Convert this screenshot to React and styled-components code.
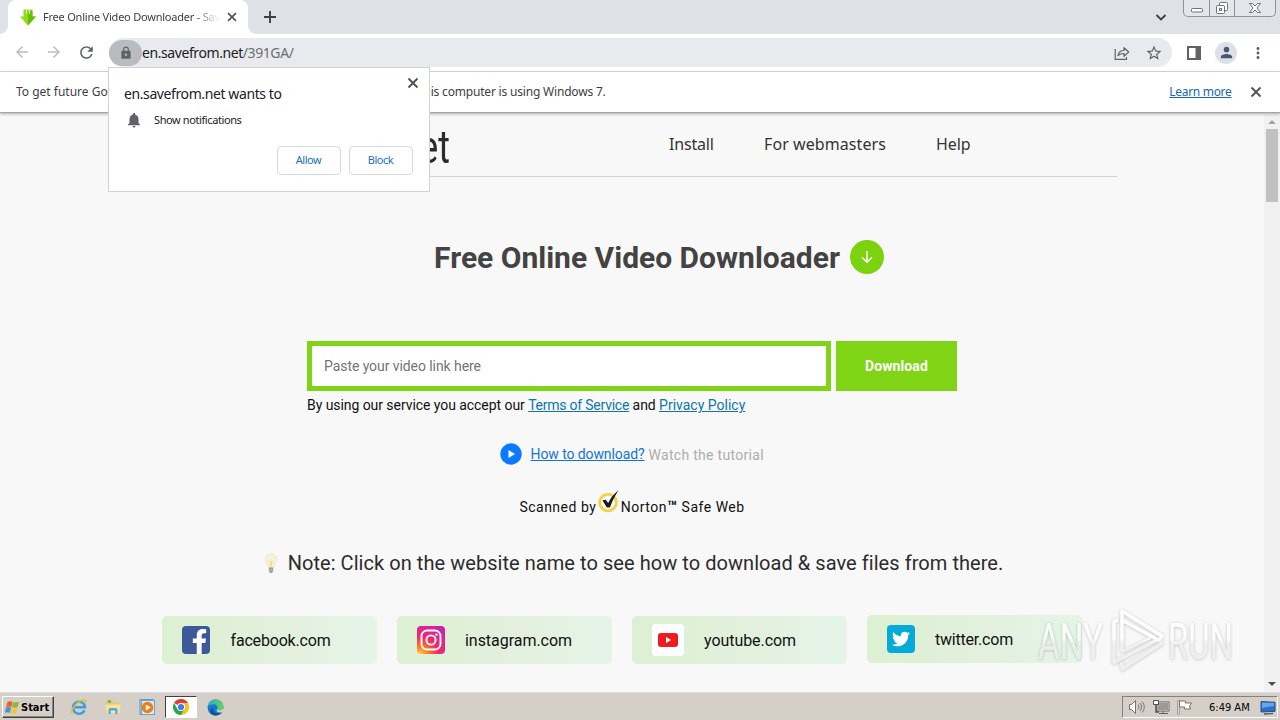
import React from 'react';
import styled, { createGlobalStyle, css } from 'styled-components';
import {
  MdArrowBack,
  MdArrowForward,
  MdRefresh,
  MdLock,
  MdNotifications,
  MdStarBorder,
  MdMoreVert,
  MdPerson,
} from 'react-icons/md';
import { FaTwitter, FaFacebookF } from 'react-icons/fa';

const GlobalStyle = createGlobalStyle`
  * {
    box-sizing: border-box;
  }

  body {
    margin: 0;
    overflow: hidden;
    background: #f8f8f8;
  }
`;

const uiFont = '"Noto Sans", "Open Sans", sans-serif';
const siteFont = 'Roboto, "Liberation Sans", sans-serif';

const Screen = styled.div`
  position: relative;
  display: flex;
  flex-direction: column;
  width: 1280px;
  height: 720px;
  overflow: hidden;
  font-family: ${uiFont};
  color: #202124;
  white-space: nowrap;

  svg {
    display: block;
    flex-shrink: 0;
  }
`;

/* Browser frame */

const TabStrip = styled.div`
  display: flex;
  height: 34px;
  flex-shrink: 0;
  background: #dee1e6;
`;

const Tab = styled.div`
  position: relative;
  display: flex;
  align-items: center;
  width: 240px;
  height: 34px;
  margin-left: 8px;
  padding: 0 9px 0 12px;
  border-radius: 8px 8px 0 0;
  background: #fff;

  &::before,
  &::after {
    content: '';
    position: absolute;
    bottom: 0;
    width: 8px;
    height: 8px;
  }

  &::before {
    left: -8px;
    background: radial-gradient(circle at 0 0, transparent 7.5px, #fff 8px);
  }

  &::after {
    right: -8px;
    background: radial-gradient(circle at 100% 0, transparent 7.5px, #fff 8px);
  }
`;

const TabTitle = styled.div`
  width: 176px;
  margin-left: 7px;
  overflow: hidden;
  font-size: 11px;
  line-height: 16px;
  letter-spacing: -0.22px;
  color: #3c4043;
  mask-image: linear-gradient(to right, black 86%, transparent 100%);
`;

const TabClose = styled.div`
  margin-left: auto;
`;

const NewTab = styled.div`
  display: flex;
  align-items: center;
  margin-left: 13px;
`;

const TabSearch = styled.div`
  display: flex;
  align-items: center;
  margin: 0 14px 0 auto;
`;

const WindowButtons = styled.div`
  display: flex;
  width: 93px;
  height: 17px;
  margin-right: 4px;
  border: 1px solid #8f939b;
  border-top: 0;
  border-radius: 0 0 5px 5px;
  background: #e3e6ea;
`;

const WindowButton = styled.div`
  display: flex;
  justify-content: center;
  width: ${(props) => props.$width}px;

  & + & {
    border-left: 1px solid #8f939b;
  }
`;

const Toolbar = styled.div`
  display: flex;
  align-items: center;
  height: 38px;
  flex-shrink: 0;
  padding: 0 13px 0 13px;
  border-bottom: 1px solid #dadce0;
  background: #fff;
  color: #5f6368;
`;

const NavButtons = styled.div`
  display: flex;
  gap: 14px;
  width: 96px;
`;

const AddressBar = styled.div`
  display: flex;
  align-items: center;
  width: 1063px;
  height: 29px;
  padding-right: 9px;
  border-radius: 15px;
  background: #e8eaed;
`;

const SiteChip = styled.div`
  display: flex;
  align-items: center;
  justify-content: center;
  width: 33px;
  height: 26px;
  border-radius: 13px;
  background: #b9bcbe;
`;

const Url = styled.div`
  flex: 1;
  font-size: 14px;
  line-height: 20px;
  letter-spacing: -0.42px;
  color: #202124;

  span {
    color: #6b6f74;
  }
`;

const AddressIcons = styled.div`
  display: flex;
  align-items: center;
  gap: 15px;
`;

const ToolbarIcons = styled.div`
  display: flex;
  align-items: center;
  margin-left: 15px;
`;

const Avatar = styled.div`
  display: flex;
  align-items: center;
  justify-content: center;
  width: 22px;
  height: 22px;
  margin: 0 12px 0 14px;
  border-radius: 50%;
  background: #dde1e7;
  color: #4a5573;
`;

const InfoBar = styled.div`
  position: relative;
  display: flex;
  align-items: center;
  height: 41px;
  flex-shrink: 0;
  padding: 0 16px;
  border-bottom: 1px solid #a6a6a6;
  background: #fff;
  box-shadow: 0 1px 3px rgba(0, 0, 0, 0.3);
  font-size: 12px;
  line-height: 16px;
  color: #3c4043;
`;

const InfoTail = styled.span`
  letter-spacing: -0.19px;
`;

const LearnMore = styled.a`
  margin: 0 16.5px 0 auto;
  color: #1967b5;
  letter-spacing: -0.3px;
  text-decoration: underline;
`;

/* Permission bubble */

const Bubble = styled.div`
  position: absolute;
  top: 67px;
  left: 108px;
  z-index: 2;
  display: flex;
  flex-direction: column;
  width: 322px;
  height: 125px;
  padding: 16px 16px 16px 15px;
  border: 1px solid #d0d2d5;
  background: #fff;
  color: #202124;
`;

const BubbleClose = styled.div`
  position: absolute;
  top: 7px;
  right: 8px;
`;

const BubbleTitle = styled.div`
  font-size: 14px;
  line-height: 19px;
  letter-spacing: -0.4px;
`;

const Permission = styled.div`
  display: flex;
  align-items: center;
  gap: 11px;
  margin-top: 8px;
  padding-left: 1px;
  font-size: 11px;
  line-height: 16px;
  letter-spacing: -0.4px;

  svg {
    color: #5f6368;
  }
`;

const BubbleActions = styled.div`
  display: flex;
  justify-content: flex-end;
  gap: 8px;
  margin-top: auto;
`;

const BubbleButton = styled.button`
  width: 64px;
  height: 29px;
  padding: 0 1px 2px 0;
  border: 1px solid #d6d8dc;
  border-radius: 4px;
  background: #fff;
  color: #1a6fc4;
  font-family: inherit;
  font-size: 11px;
  line-height: 14px;
  letter-spacing: -0.5px;
`;

/* Site */

const Viewport = styled.div`
  display: flex;
  height: 580px;
  flex-shrink: 0;
  background: #f8f8f8;
`;

const Site = styled.main`
  display: flex;
  flex-direction: column;
  align-items: center;
  width: 1264px;
  font-family: ${siteFont};
`;

const Header = styled.header`
  display: flex;
  width: 970px;
  height: 64px;
  border-bottom: 1px solid #d2d2d2;
`;

const Logo = styled.div`
  width: 303px;
  height: 60px;
  font-size: 47px;
  line-height: 67px;
  text-align: right;
  color: #2b2b2b;
  transform: scaleX(0.76);
  transform-origin: right;
`;

const Menu = styled.nav`
  display: flex;
  margin-left: 219px;
  font-family: ${uiFont};
  font-size: 16px;
  line-height: 62px;
  color: #333;
`;

const MenuItem = styled.a`
  width: ${(props) => props.$width}px;
  letter-spacing: ${(props) => props.$spacing}px;
`;

const Title = styled.h1`
  display: flex;
  align-items: center;
  gap: 10px;
  margin: 62px 0 0 54px;
  height: 36px;
  font-size: 30px;
  font-weight: 700;
  color: #434343;
`;

const Form = styled.div`
  display: flex;
  gap: 5px;
  width: 650px;
  margin-top: 66px;
`;

const LinkInput = styled.input`
  width: 524px;
  height: 50px;
  padding: 0 12px;
  border: 5px solid #7ed415;
  border-radius: 0;
  outline: none;
  background: #fff;
  font-family: inherit;
  font-size: 14px;
  letter-spacing: -0.07px;

  &::placeholder {
    color: #757575;
    opacity: 1;
  }
`;

const DownloadButton = styled.button`
  width: 121px;
  height: 50px;
  padding: 0;
  border: 0;
  background: #7ed415;
  color: #fff;
  font-family: inherit;
  font-size: 14px;
  font-weight: 700;
  letter-spacing: 0.1px;
`;

const Terms = styled.div`
  width: 650px;
  margin-top: 4px;
  font-size: 14px;
  line-height: 20px;
  letter-spacing: -0.06px;
  color: #111;
`;

const SiteLink = styled.a`
  color: ${(props) => props.$color};
  letter-spacing: ${(props) => props.$spacing || 0}px;
  text-decoration: underline;
`;

const Tutorial = styled.div`
  display: flex;
  align-items: center;
  height: 24px;
  margin-top: 27px;
  font-size: 14px;

  svg {
    margin-right: 8.5px;
  }
`;

const Muted = styled.span`
  margin: 2px 0 0 4px;
  color: #adadad;
  letter-spacing: 0.3px;
`;

const Scanned = styled.div`
  display: flex;
  height: 26px;
  margin-top: 24px;
  font-size: 14px;
  line-height: 34px;
  letter-spacing: 0.5px;
  color: #111;

  svg {
    margin: -1px 0 0 -0.5px;
  }

  b {
    font-size: 16px;
  }
`;

const Note = styled.div`
  display: flex;
  align-items: center;
  gap: 9px;
  height: 28px;
  margin-top: 33px;
  margin-left: 2px;
  font-size: 20px;
  letter-spacing: 0.055px;
  color: #2c2c2c;
`;

const Cards = styled.div`
  display: flex;
  gap: 20px;
  width: 920px;
  margin: 39px 0 0 -20px;
`;

const Card = styled.div`
  display: flex;
  align-items: center;
  width: 215px;
  height: 48px;
  margin-top: ${(props) => (props.$raised ? -1 : 0)}px;
  padding-left: 20px;
  border-radius: 5px;
  background: linear-gradient(90deg, #dcf0d2 0%, #e3f0de 60%, #e4f5e8 100%);
  font-size: 16px;
  color: #111;
`;

const CardLabel = styled.span`
  margin-left: ${(props) => props.$offset}px;
  letter-spacing: ${(props) => props.$spacing}px;
`;

const Badge = styled.div`
  display: flex;
  align-items: center;
  justify-content: center;
  width: 28px;
  height: 28px;
  border-radius: 4px;
  overflow: hidden;
  color: #fff;

  ${(props) =>
    props.$kind === 'facebook' &&
    css`
      align-items: flex-end;
      padding-left: 7px;
      background: #3c5a9a;
    `}
  ${(props) =>
    props.$kind === 'instagram' &&
    css`
      background: radial-gradient(circle at 10% 105%, #fd5 0%, #fa7e1e 22%, #ee2a6b 48%, #d6249f 78%, #962fbf 115%);
    `}
  ${(props) =>
    props.$kind === 'youtube' &&
    css`
      width: 32px;
      height: 32px;
      background: #fff;
    `}
  ${(props) =>
    props.$kind === 'twitter' &&
    css`
      background: #06aad8;
    `}
`;

const ScrollBar = styled.div`
  display: flex;
  flex-direction: column;
  align-items: center;
  justify-content: space-between;
  width: 16px;
  padding: 7px 0 7px;
  background: #f1f1f1;
`;

const Thumb = styled.div`
  width: 12px;
  height: 73px;
  margin: 5px 0 auto;
  background: #c1c1c1;
`;

const Arrow = styled.div`
  border: 4px solid transparent;
  border-top-width: ${(props) => (props.$up ? 0 : 4)}px;
  border-bottom-width: ${(props) => (props.$up ? 4 : 0)}px;
  border-top-color: #505050;
  border-bottom-color: #a3a3a3;
`;

const Watermark = styled.div`
  position: absolute;
  left: 1030px;
  top: 600px;
`;

/* Taskbar */

const TaskBar = styled.div`
  display: flex;
  align-items: center;
  height: 27px;
  padding: 1px 2px 0 2px;
  background: #d5cfc8;
  box-shadow: 0 -1px 0 #d8dcdf;
`;

const StartButton = styled.div`
  display: flex;
  align-items: center;
  gap: 1px;
  width: 52px;
  height: 22px;
  padding-left: 2px;
  border: 1px solid;
  border-color: #fff #404040 #404040 #fff;
  box-shadow: inset -1px -1px 0 #8a857e;
  color: #000;
  font: bold 11px 'DejaVu Sans Condensed', 'DejaVu Sans', sans-serif;
`;

const QuickLaunch = styled.div`
  display: flex;
  align-items: center;
  margin-left: 8px;
`;

const TaskItem = styled.div`
  display: flex;
  align-items: center;
  justify-content: center;
  width: ${(props) => (props.$active ? 32 : 34)}px;
  height: 22px;
  ${(props) =>
    props.$active &&
    css`
      margin: 0 1px;
      border: 1px solid;
      border-color: #404040 #fff #fff #404040;
      background: #fff;
    `}
`;

const Tray = styled.div`
  display: flex;
  align-items: center;
  width: 156px;
  height: 22px;
  margin-left: auto;
  padding: 0 1px 0 5px;
  border: 1px solid;
  border-color: #85807a #fff #fff #85807a;
`;

const TrayIcons = styled.div`
  display: flex;
  gap: 6px;
`;

const Clock = styled.div`
  margin: 0 auto 0 15px;
  color: #000;
  font: 11px 'DejaVu Sans Condensed', 'DejaVu Sans', sans-serif;
`;

function Favicon() {
  return (
    <svg width="16" height="18" viewBox="0 0 16 18">
      <path d="M3.500 1.500h9v7H16l-8 9-8-9h3.500z" fill="#8fdc18" />
      <path d="M8 4l4.500-1v5.500H16l-8 9z" fill="#6cbb0c" />
      <path d="M6.500 1v5M9.500 1v5" stroke="#e9fbc4" strokeWidth=".9" />
    </svg>
  );
}

function CloseIcon({ size }) {
  return (
    <svg width={size} height={size} viewBox="0 0 16 16">
      <path d="M3.500 3.500l9 9M12.500 3.500l-9 9" stroke="#505458" strokeWidth="1.900" />
    </svg>
  );
}

function PlusIcon() {
  return (
    <svg width="18" height="18" viewBox="0 0 18 18">
      <path d="M9 3v12M3 9h12" stroke="#3c4043" strokeWidth="1.900" />
    </svg>
  );
}

function ChevronIcon() {
  return (
    <svg width="16" height="16" viewBox="0 0 16 16">
      <path d="M3.500 6l4.500 4.500L12.500 6" fill="none" stroke="#3c4043" strokeWidth="1.800" />
    </svg>
  );
}

function ShareIcon() {
  return (
    <svg width="16" height="16" viewBox="0 0 16 16" fill="none" stroke="#5f6368" strokeWidth="1.2">
      <path d="M1.200 4v10.300h11.300V12" />
      <path d="M4 10.500c.6-3.400 2.700-5 6-5V2.700L14.700 7 10 11.300V8.500c-2.600 0-4.400.5-6 2z" strokeLinejoin="round" />
    </svg>
  );
}

function SidePanelIcon() {
  return (
    <svg width="14" height="14" viewBox="0 0 14 14">
      <path d="M1 1h12v12H1z" fill="none" stroke="#5f6368" strokeWidth="2" />
      <path d="M8.500 1H13v12H8.500z" fill="#5f6368" />
    </svg>
  );
}

function NortonIcon() {
  return (
    <svg width="25" height="26" viewBox="0 0 25 26">
      <circle cx="12" cy="13.500" r="8.300" fill="#fff" stroke="#f3d250" strokeWidth="3" />
      <path d="M6.500 11.500l3-1 2.700 3.500C14.500 9 17.500 5 22.500 1.500 18.500 7.500 16 12.500 14 18.500h-3.200z" fill="#1c1c1c" />
    </svg>
  );
}

function BulbIcon() {
  return (
    <svg width="16" height="22" viewBox="0 0 16 22">
      <path
        d="M8 1.500a5.700 5.700 0 0 0-5.600 6C2.400 10 5 12 5.200 15.500h5.600C11 12 13.600 10 13.600 7.500a5.700 5.700 0 0 0-5.600-6z"
        fill="#f7f1d5"
        stroke="#e9e3c8"
        strokeWidth=".8"
      />
      <path d="M6 7.500l1.300 2L8 8l.8 1.500 1.200-2-1.200 7.500H7.200z" fill="#f3df8c" />
      <path d="M5.800 15.500h4.400v3.300L9.200 21H6.800l-1-2.200z" fill="#98978a" />
      <path d="M5.500 17.200h5M5.800 19h4.400" stroke="#d3d3c8" strokeWidth=".6" />
    </svg>
  );
}

function InstagramGlyph() {
  return (
    <svg width="22" height="22" viewBox="0 0 22 22" fill="none" stroke="#fff" strokeWidth="1.900">
      <rect x="1.500" y="1.500" width="19" height="19" rx="5.500" />
      <circle cx="11" cy="11" r="4.600" />
      <circle cx="16.400" cy="5.600" r="1.200" fill="#fff" stroke="none" />
    </svg>
  );
}

function YoutubeGlyph() {
  return (
    <svg width="20" height="14" viewBox="0 0 20 14">
      <rect width="20" height="14" rx="3" fill="#ed1c24" />
      <path d="M8 4l5 3-5 3z" fill="#fff" />
    </svg>
  );
}

function WindowsFlag() {
  return (
    <svg width="15" height="15" viewBox="0 0 15 15">
      <path d="M2.500 2C4.300.8 5.700 1 7.500 1.800L6.300 7C4.700 6.200 3.200 6.200 1.200 7z" fill="#e8602c" />
      <path d="M8 2c1.800.8 3.700.8 6-.4L12.700 7c-2 1-3.700.8-5.700 0z" fill="#86b93c" />
      <path d="M1 7.600c1.800-.9 3.400-.9 5.100 0L4.800 12.900C3.300 12 1.700 12-.2 12.900z" fill="#4a8fd6" />
      <path d="M6.800 7.900c1.700.8 3.600.8 5.700-.2L11.200 13c-1.900 1-3.700.9-5.700.1z" fill="#f5c52e" />
    </svg>
  );
}

function ExplorerIcon() {
  return (
    <svg width="18" height="18" viewBox="0 0 18 18" fill="none">
      <path d="M14.500 12.200A6 6 0 1 1 15 9.200H4.500" stroke="#3ba0e2" strokeWidth="2.500" />
      <path d="M2.500 15.800C-.5 14 5 5.500 11 2.700c3.500-1.600 5.500-.7 4.300 2" stroke="#efb82f" strokeWidth="1.400" />
    </svg>
  );
}

function FolderIcon() {
  return (
    <svg width="18" height="18" viewBox="0 0 18 18">
      <path d="M2 3h5l1 1.500h7V14H2z" fill="#e8c765" />
      <path d="M4 2h3v3H4z" fill="#6fb866" />
      <path d="M1.500 6.500h15L15.500 15h-13z" fill="#f7e39a" />
      <path d="M4.500 16v-4.200c0-1 .8-1.800 1.800-1.800h5.500c1 0 1.700.8 1.700 1.800V16h-2.300v-3.500H6.800V16z" fill="#5ba8da" />
    </svg>
  );
}

function PlayerIcon() {
  return (
    <svg width="17" height="17" viewBox="0 0 17 17">
      <rect x="1" y=".5" width="13" height="15" fill="#a8d3f1" stroke="#5b9cc9" />
      <rect x="2.500" y="1.500" width="13" height="14" fill="#d6ebf8" stroke="#6aa6cf" />
      <circle cx="8.500" cy="8.500" r="5.800" fill="#ef7d15" />
      <path d="M6.800 5.500l5 3-5 3z" fill="#fff" />
    </svg>
  );
}

function ChromeIcon() {
  return (
    <svg width="16" height="16" viewBox="0 0 16 16">
      <path d="M8 8L1.070 4A8 8 0 0 1 14.930 4z" fill="#e33b2e" />
      <path d="M8 4h6.930A8 8 0 0 1 8 16l3.500-6z" fill="#fbc116" />
      <path d="M8 16A8 8 0 0 1 1.070 4l3.430 6h7z" fill="#2da14c" />
      <circle cx="8" cy="8" r="4" fill="#fff" />
      <circle cx="8" cy="8" r="3.100" fill="#3b7ded" />
    </svg>
  );
}

function EdgeIcon() {
  return (
    <svg width="17" height="17" viewBox="0 0 17 17">
      <defs>
        <linearGradient id="edgeTop" x1="0" y1="0" x2="1" y2=".3">
          <stop offset="0" stopColor="#2ba7dc" />
          <stop offset="1" stopColor="#62d35c" />
        </linearGradient>
      </defs>
      <circle cx="8.500" cy="8.500" r="8" fill="#1878cc" />
      <path
        d="M.7 7.500C1.500 3.200 4.700.5 8.600.5c4.600 0 7.900 3.500 7.900 6.800 0 2.400-1.700 3.900-4 3.900-1.700 0-2.600-.6-2.100-1.600C11.200 8 10 5.500 7 5.200 4.200 5 1.800 6.200.7 7.500z"
        fill="url(#edgeTop)"
      />
      <path d="M6 8.500c-1 3.300 2 6.300 5.500 5.800 1.600-.2 2.800-.8 3.800-1.500-2.300 4-7.600 4.700-10.400 2.500C2.500 13.500 3.300 9.800 6 8.500z" fill="#114f9c" />
      <path d="M10.200 9.500c-.5 1 .5 1.800 2.300 1.700 2-.1 3.200-1 4-2.400l.5 3.200-1.500 1c-3.500 1.600-7.200-.4-5.300-3.500z" fill="#d5cfc8" />
    </svg>
  );
}

function SpeakerIcon() {
  return (
    <svg width="18" height="16" viewBox="0 0 18 16" fill="none" stroke="#77736e">
      <path d="M1.500 5.500h2l4-4v13l-4-4h-2z" fill="#fff" />
      <path d="M10 5.500c1.200 1.500 1.200 3.500 0 5M12 4c2 2.500 2 5.500 0 8M14 2.500c3 3.500 3 7.500 0 11" />
    </svg>
  );
}

function NetworkIcon() {
  return (
    <svg width="18" height="16" viewBox="0 0 18 16">
      <path d="M5.500 3.500h11v8h-11z" fill="#9c9893" stroke="#fff" />
      <path d="M5 3h12v9H5zM7 14.500h9M11 12v2" fill="none" stroke="#625f5b" />
      <path d="M1.500 1.500h5v4h-5z" fill="#fff" stroke="#55524e" />
      <path d="M4 5.500v7.500h3" fill="none" stroke="#55524e" strokeWidth="1.500" />
    </svg>
  );
}

function FlagIcon() {
  return (
    <svg width="18" height="16" viewBox="0 0 18 16">
      <path d="M3.500 2h6v2h6l-2 3 1 3h-6V8h-5z" fill="#fff" stroke="#77736e" />
      <path d="M2.500 1v14.500" stroke="#77736e" strokeWidth="2" />
      <path d="M2.500 1.500v13.500" stroke="#fff" strokeWidth=".7" />
    </svg>
  );
}

function DesktopIcon() {
  return (
    <svg width="16" height="15" viewBox="0 0 16 15">
      <path d="M1 1.500l14 .8v9L1 12z" fill="#2b6fc9" stroke="#244e8c" />
      <path d="M2 2.500l12 .5v3L2 8z" fill="#65a5ea" />
      <path d="M4 14l9-.5" stroke="#57595c" strokeWidth="1.300" />
    </svg>
  );
}

const cards = [
  { kind: 'facebook', label: 'facebook.com', offset: 20.5, spacing: -0.18, icon: <FaFacebookF size={25} /> },
  { kind: 'instagram', label: 'instagram.com', offset: 20, spacing: -0.04, icon: <InstagramGlyph /> },
  { kind: 'youtube', label: 'youtube.com', offset: 20, spacing: -0.06, icon: <YoutubeGlyph /> },
  { kind: 'twitter', label: 'twitter.com', offset: 20, spacing: -0.21, icon: <FaTwitter size={18} />, raised: true },
];

function BrowserFrame() {
  return (
    <>
      <TabStrip>
        <Tab>
          <Favicon />
          <TabTitle>Free Online Video Downloader - SaveF</TabTitle>
          <TabClose>
            <CloseIcon size={14} />
          </TabClose>
        </Tab>
        <NewTab>
          <PlusIcon />
        </NewTab>
        <TabSearch>
          <ChevronIcon />
        </TabSearch>
        <WindowButtons>
          <WindowButton $width={25}>
            <svg width="14" height="16" viewBox="0 0 14 16">
              <rect x="1.500" y="8.500" width="11" height="3.500" rx="1" fill="#fff" stroke="#6d7178" />
            </svg>
          </WindowButton>
          <WindowButton $width={25}>
            <svg width="14" height="16" viewBox="0 0 14 16" fill="#fff" stroke="#6d7178">
              <rect x="4.500" y="2.500" width="8" height="8" rx="1" />
              <rect x="1.500" y="5.500" width="8" height="8" rx="1" />
              <rect x="4.500" y="8.500" width="2" height="2" />
            </svg>
          </WindowButton>
          <WindowButton $width={41}>
            <svg width="14" height="16" viewBox="0 0 14 16">
              <path
                d="M1.500 3.500h3L7 6l2.500-2.500h3L9 8l3.500 4.500h-3L7 10l-2.500 2.500h-3L5 8z"
                fill="#fff"
                stroke="#6d7178"
              />
            </svg>
          </WindowButton>
        </WindowButtons>
      </TabStrip>
      <Toolbar>
        <NavButtons>
          <MdArrowBack size={18} color="#babcbe" />
          <MdArrowForward size={18} color="#babcbe" />
          <MdRefresh size={19} />
        </NavButtons>
        <AddressBar>
          <SiteChip>
            <MdLock size={14} />
          </SiteChip>
          <Url>
            en.savefrom.net<span>/391GA/</span>
          </Url>
          <AddressIcons>
            <ShareIcon />
            <MdStarBorder size={18} />
          </AddressIcons>
        </AddressBar>
        <ToolbarIcons>
          <SidePanelIcon />
          <Avatar>
            <MdPerson size={17} />
          </Avatar>
          <MdMoreVert size={18} />
        </ToolbarIcons>
      </Toolbar>
      <InfoBar>
        <span>To get future Google Chrome updates, you'll need Windows 10 or later. Th</span>
        <InfoTail>is computer is using Windows 7.</InfoTail>
        <LearnMore>Learn more</LearnMore>
        <CloseIcon size={16} />
      </InfoBar>
    </>
  );
}

function NotificationBubble() {
  return (
    <Bubble>
      <BubbleClose>
        <CloseIcon size={16} />
      </BubbleClose>
      <BubbleTitle>en.savefrom.net wants to</BubbleTitle>
      <Permission>
        <MdNotifications size={18} />
        Show notifications
      </Permission>
      <BubbleActions>
        <BubbleButton>Allow</BubbleButton>
        <BubbleButton>Block</BubbleButton>
      </BubbleActions>
    </Bubble>
  );
}

function SavefromPage() {
  return (
    <Site>
      <Header>
        <Logo>savefrom.net</Logo>
        <Menu>
          <MenuItem $width={95} $spacing={-0.2}>Install</MenuItem>
          <MenuItem $width={172} $spacing={0.08}>For webmasters</MenuItem>
          <MenuItem $width={34} $spacing={-0.1}>Help</MenuItem>
        </Menu>
      </Header>
      <Title>
        Free Online Video Downloader
        <svg width="34" height="34" viewBox="0 0 34 34">
          <circle cx="17" cy="17" r="17" fill="#7ad30c" />
          <path d="M17 11v11M12 17.300l5 4.900 5-4.900" fill="none" stroke="#fff" strokeWidth="1.500" />
        </svg>
      </Title>
      <Form>
        <LinkInput placeholder="Paste your video link here" />
        <DownloadButton>Download</DownloadButton>
      </Form>
      <Terms>
        By using our service you accept our <SiteLink $color="#0e76a8" $spacing={-0.23}>Terms of Service</SiteLink> and{' '}
        <SiteLink $color="#0e76a8">Privacy Policy</SiteLink>
      </Terms>
      <Tutorial>
        <svg width="22" height="22" viewBox="0 0 22 22">
          <circle cx="11" cy="11" r="10.700" fill="#0a7aff" />
          <path d="M8.500 7l6.500 4-6.500 4z" fill="#fff" />
        </svg>
        <SiteLink $color="#1373d8" $spacing={-0.1}>How to download?</SiteLink>
        <Muted>Watch the tutorial</Muted>
      </Tutorial>
      <Scanned>
        Scanned by
        <NortonIcon />
        <span>
          Norton<b>™</b> Safe Web
        </span>
      </Scanned>
      <Note>
        <BulbIcon />
        Note: Click on the website name to see how to download & save files from there.
      </Note>
      <Cards>
        {cards.map((card) => (
          <Card key={card.kind} $raised={card.raised}>
            <Badge $kind={card.kind}>{card.icon}</Badge>
            <CardLabel $offset={card.offset} $spacing={card.spacing}>
              {card.label}
            </CardLabel>
          </Card>
        ))}
      </Cards>
    </Site>
  );
}

function RecorderMark() {
  return (
    <Watermark>
      <svg width="212" height="80" viewBox="0 0 212 80">
        <defs>
          <filter id="markShadow" x="-10%" y="-10%" width="120%" height="120%">
            <feDropShadow dx="0" dy="0.5" stdDeviation="1.7" floodColor="#666" floodOpacity="0.55" />
          </filter>
          <linearGradient id="markFill" gradientUnits="userSpaceOnUse" x1="0" y1="38" x2="0" y2="44">
            <stop offset="0" stopColor="#fff" />
            <stop offset="1" stopColor="#ececec" />
          </linearGradient>
        </defs>
        <g filter="url(#markShadow)" opacity="0.75" fontFamily="Roboto, sans-serif" fontSize="50" fill="url(#markFill)">
          <text x="8" y="59" textLength="65" lengthAdjust="spacingAndGlyphs">
            ANY
          </text>
          <text x="138" y="59" textLength="65" lengthAdjust="spacingAndGlyphs">
            RUN
          </text>
          <g fill="none" stroke="url(#markFill)" strokeWidth="3.500" strokeLinejoin="round">
            <path d="M88 20l-4 1.500v41L127 40" />
            <path d="M92 52V11l40 25-3 4.500L92 20" />
            <path d="M92 62v7l41-26.500" />
            <path d="M92 52l28-14" strokeWidth="2.500" />
          </g>
        </g>
      </svg>
    </Watermark>
  );
}

function App() {
  return (
    <Screen>
      <GlobalStyle />
      <BrowserFrame />
      <Viewport>
        <SavefromPage />
        <ScrollBar>
          <Arrow $up />
          <Thumb />
          <Arrow />
        </ScrollBar>
      </Viewport>
      <TaskBar>
        <StartButton>
          <WindowsFlag />
          Start
        </StartButton>
        <QuickLaunch>
          <TaskItem>
            <ExplorerIcon />
          </TaskItem>
          <TaskItem>
            <FolderIcon />
          </TaskItem>
          <TaskItem>
            <PlayerIcon />
          </TaskItem>
          <TaskItem $active>
            <ChromeIcon />
          </TaskItem>
          <TaskItem>
            <EdgeIcon />
          </TaskItem>
        </QuickLaunch>
        <Tray>
          <TrayIcons>
            <SpeakerIcon />
            <NetworkIcon />
            <FlagIcon />
          </TrayIcons>
          <Clock>6:49 AM</Clock>
          <DesktopIcon />
        </Tray>
      </TaskBar>
      <RecorderMark />
      <NotificationBubble />
    </Screen>
  );
}

export default App;
